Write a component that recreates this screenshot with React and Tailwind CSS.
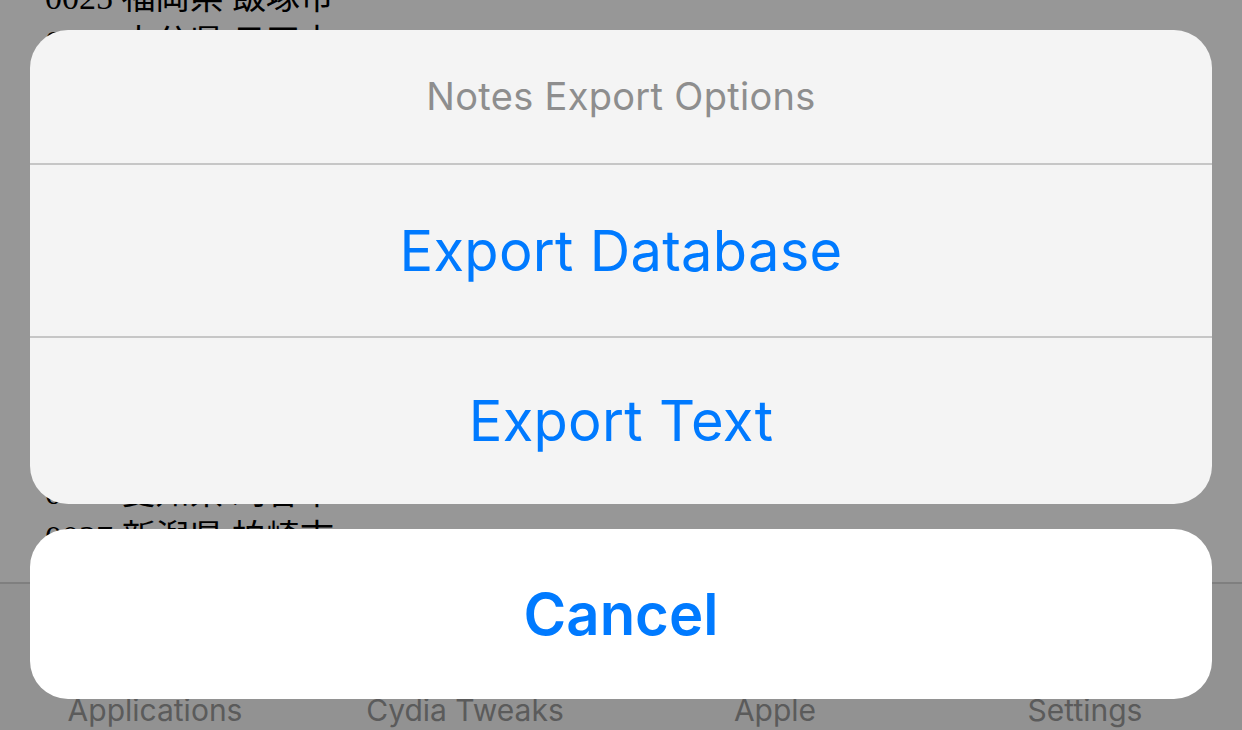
import React from "react";

const rows = [
  "0025 福岡県 飯塚市",
  "0026 大分県 日田市",
  "0027 熊本県 八代市",
  "0028 宮崎県 延岡市",
  "0029 山口県 岩国市",
  "0030 広島県 呉市",
  "0031 岡山県 倉敷市",
  "0032 兵庫県 姫路市",
  "0033 大阪府 堺市",
  "0034 京都府 宇治市",
  "0035 三重県 津市",
  "0036 愛知県 刈谷市",
  "0037 新潟県 柏崎市",
  "0038 長野県 松本市",
];

const tabs = ["Applications", "Cydia Tweaks", "Apple", "Settings"];

const App = () => {
  return (
    <div className="relative w-[1242px] h-[730px] overflow-hidden bg-[#979797] flex flex-col">
      <div className="flex-1 overflow-hidden pl-[45px] text-black text-[34px] font-['Liberation_Serif','Noto_Sans_CJK_JP',serif]">
        <div className="mt-[-25px]">
          {rows.map((r) => (
            <div key={r} className="h-[45px] leading-[45px] whitespace-nowrap">
              {r}
            </div>
          ))}
        </div>
      </div>
      <div className="h-[148px] shrink-0 border-t-2 border-[#7f7f7f] bg-[#929292] flex items-end font-['Inter',sans-serif] text-[30px] leading-[40px] text-[#5b5b5b]">
        {tabs.map((t) => (
          <div key={t} className="w-[310px] text-center">
            {t}
          </div>
        ))}
      </div>

      <div className="absolute inset-0 flex flex-col px-[30px] pt-[30px] gap-[25px] font-['Inter',sans-serif]">
        <div className="rounded-[38px] bg-[#f4f4f4] overflow-hidden flex flex-col">
          <div className="h-[133px] flex items-center justify-center text-[38px] text-[#8e8e8e] tracking-[0.3px]">
            Notes Export Options
          </div>
          <div className="h-[2px] bg-[#c6c6c6]" />
          <div className="h-[171px] flex items-center justify-center text-[56px] tracking-[0.3px] text-[#007aff]">
            Export Database
          </div>
          <div className="h-[2px] bg-[#c6c6c6]" />
          <div className="h-[166px] flex items-center justify-center text-[56px] tracking-[0.3px] text-[#007aff]">
            Export Text
          </div>
        </div>
        <div className="h-[170px] rounded-[38px] bg-white flex items-center justify-center text-[58px] font-semibold text-[#007aff]">
          Cancel
        </div>
      </div>
    </div>
  );
};

export default App;
